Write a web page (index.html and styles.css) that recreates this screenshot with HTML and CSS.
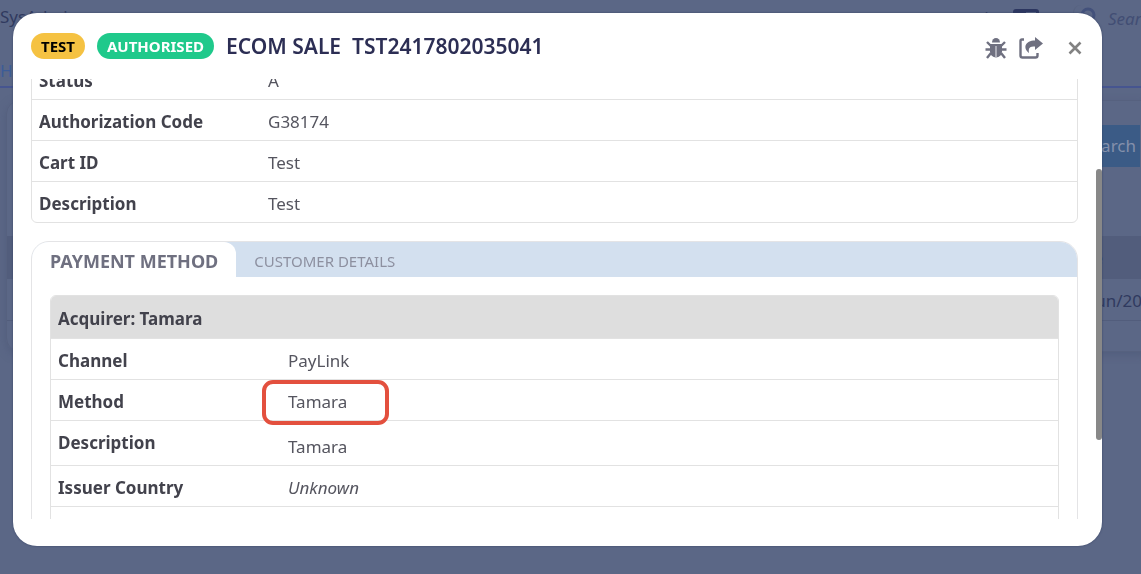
FILE: index.html
```
<!DOCTYPE html>
<html lang="en">
	<head>
		<meta charset="utf-8" />
		<title>ECOM SALE TST2417802035041</title>
		<link rel="stylesheet" href="styles.css">
	</head>
	<body>
		<div class="page">
			<header class="topbar">
				<span class="brand">SysAdmin</span>
				<div class="tools">
					<span class="mode">Mode</span>
					<span class="switch"></span>
					<div class="quick">
						<svg width="18" height="18" viewBox="0 0 18 18"><circle cx="8" cy="8" r="6" fill="none" stroke="#43517b" stroke-width="3"/><path d="M12 12l5 5" stroke="#43517b" stroke-width="3"/></svg>
						<input type="text" placeholder="Search" aria-label="Quick search">
					</div>
				</div>
			</header>
			<nav class="menu"><a href="#">Home</a></nav>
			<section class="panel">
				<div class="filter"><button type="button" class="search">Search</button></div>
				<div class="list_head">Date</div>
				<div class="list_row">26/Jun/20</div>
			</section>
		</div>

		<div class="overlay">
			<section class="modal" role="dialog" aria-labelledby="title">
				<header class="modal_head">
					<span class="badge test">TEST</span>
					<span class="badge ok">AUTHORISED</span>
					<h1 id="title">ECOM SALE&nbsp; TST2417802035041</h1>
					<div class="actions">
						<button type="button" aria-label="Debug">
							<svg width="22" height="22" viewBox="0 0 22 22">
								<path d="M7 5.500a4 4.500 0 0 1 8 0z" fill="#6f7080"/>
								<path d="M5 7h12v7.500a6 6 0 0 1-12 0z" fill="#6f7080"/>
								<path d="M6 9L2 5M16 9l4-4M6 12.500H.5M16 12.500h5.500M6 16l-4 5M16 16l4 5" fill="none" stroke="#6f7080" stroke-width="2.400"/>
								<path d="M11 9v11" stroke="#d5d5dc" stroke-width="1.200"/>
							</svg>
						</button>
						<button type="button" aria-label="Share">
							<svg width="24" height="22" viewBox="0 0 24 22">
								<path d="M5 2.500H3A1.500 1.500 0 0 0 1.500 4v14.500a2 2 0 0 0 2 2h13a2 2 0 0 0 2-2V16" fill="none" stroke="#6f7080" stroke-width="2.400"/>
								<path d="M16 0l8 6.500-8 6.500V9.500c-5 0-7 1-6 6.500C3.500 11 6 3.500 16 3.500z" fill="#6f7080"/>
							</svg>
						</button>
						<button type="button" class="close" aria-label="Close">
							<svg width="14" height="14" viewBox="0 0 14 14"><path d="M1.500 1.500l11 11M12.500 1.500l-11 11" stroke="#828282" stroke-width="2.600"/></svg>
						</button>
					</div>
				</header>

				<div class="modal_body">
					<table class="info summary">
						<tr><th scope="row">Status</th><td>A</td></tr>
						<tr><th scope="row">Authorization Code</th><td>G38174</td></tr>
						<tr><th scope="row">Cart ID</th><td>Test</td></tr>
						<tr><th scope="row">Description</th><td>Test</td></tr>
					</table>

					<div class="card">
						<div class="tabs" role="tablist">
							<button type="button" role="tab" class="active" aria-selected="true">PAYMENT METHOD</button>
							<button type="button" role="tab" aria-selected="false">CUSTOMER DETAILS</button>
						</div>
						<div class="tab_body">
							<table class="info">
								<tr class="group"><th colspan="2">Acquirer: Tamara</th></tr>
								<tr><th scope="row">Channel</th><td>PayLink</td></tr>
								<tr><th scope="row">Method</th><td><span class="marked">Tamara</span></td></tr>
								<tr class="tall"><th scope="row">Description</th><td>Tamara</td></tr>
								<tr><th scope="row">Issuer Country</th><td><i>Unknown</i></td></tr>
								<tr><th></th><td></td></tr>
							</table>
						</div>
					</div>
				</div>
				<div class="scrollbar"></div>
			</section>
		</div>
	</body>
</html>
```
FILE: styles.css
```
*,*:after{box-sizing: border-box;}
body{margin: 0;background: #5b6786;color: #42424c;font-family: "Noto Sans","Open Sans",sans-serif;font-size: 17px;line-height: 24px;}
button{padding: 0;border: 0;background: none;font: inherit;color: inherit;cursor: pointer;}
svg{display: block;}

/* page under the dialog */
.page{color: #303a5f;overflow: hidden;}
.topbar{display: flex;justify-content: space-between;height: 56px;padding-top: 5px;}
.tools{display: flex;margin-right: -60px;}
.mode{margin-right: 16px;font-size: 15px;}
.switch{width: 26px;height: 16px;margin: 4px 34px 0 0;border: 3px solid #2c3660;border-left-width: 13px;border-radius: 3px;}
.quick{display: flex;gap: 10px;width: 128px;height: 32px;padding: 2px 0 0 6px;border-left: 1px solid #56617f;border-radius: 8px;}
.quick input{width: 80px;height: 22px;padding: 0;border: 0;background: none;font: italic 17px "Noto Sans",sans-serif;}
.quick input::placeholder{color: #424e74;opacity: 1;}
.menu{height: 32px;padding-top: 3px;border-bottom: 2px solid #465590;}
.menu a{color: #3c5c97;text-decoration: none;}
.panel{height: 252px;margin: 12px -14px 12px 6px;border: 1px solid #56617f;border-radius: 14px;box-shadow: 0 3px 8px #525e7d;}
.filter{display: flex;justify-content: flex-end;height: 135px;padding: 24px 14px 0 0;}
.search{width: 86px;height: 42px;padding-right: 4px;background: #3b5b86;color: #8490ab;text-align: right;}
.list_head{height: 43px;padding: 10px 51px 0 0;background: #525d7c;text-align: right;}
.list_row{height: 42px;padding: 10px 12px 0 0;border-bottom: 1px solid #525d7c;text-align: right;}

/* dialog */
.overlay{position: fixed;top: 0;right: 0;bottom: 0;left: 0;display: flex;padding: 13px 39px 28px 13px;}
.modal{position: relative;display: flex;flex: 1;flex-direction: column;min-width: 0;padding: 0 24px 27px 18px;border-radius: 24px;background: #fff;box-shadow: 0 0 2px #333f60;}
.modal_head{display: flex;align-items: center;height: 66px;}
.badge{height: 26px;margin-right: 12px;padding: 0 10px;border-radius: 13px;font-size: 15px;line-height: 27px;font-weight: 700;}
.test{background: #f5c242;color: #000;}
.ok{background: #1fc98b;color: #fff;}
.modal h1{margin: 0;color: #2c2e54;font-size: 21px;line-height: 28px;font-weight: 600;}
.actions{display: flex;align-items: center;gap: 12px;margin: 4px -4px 0 auto;}
.close{margin-left: 13px;}
.modal_body{flex: 1;min-height: 0;overflow: hidden;}
.scrollbar{position: absolute;top: 156px;right: 0;width: 6px;height: 271px;border-radius: 3px;background: #888;}

.info{width: 100%;border: 1px solid #e2e2e2;border-radius: 6px;border-spacing: 0;}
.info th,.info td{height: 41px;padding: 3px 7px 0;border-bottom: 1px solid #e2e2e2;text-align: left;}
.info th{width: 229px;font-weight: 700;}
.info td{color: #55555f;}
.info tr:last-child th,.info tr:last-child td{height: 40px;border-bottom: 0;}
.info .group th{height: 43px;background: #dedede;border-radius: 5px 5px 0 0;}
.info .tall th,.info .tall td{height: 45px;padding-top: 0;}
.info .tall td{padding-top: 8px;}
.summary{margin: -21px 0 18px;}
.marked{position: relative;}
.marked:after{content: "";position: absolute;left: -26px;top: -10px;width: 127px;height: 45px;border: 4px solid #e3503e;border-radius: 11px;}

.card{border: 1px solid #e4e4e6;border-radius: 18px;overflow: hidden;}
.tabs{display: flex;height: 35px;background: #d3e0ef;}
.tabs button{padding: 2px 18px 0;color: #8d90a0;font-size: 15px;}
.tabs .active{border-top-right-radius: 12px;background: #fff;color: #6f7080;font-size: 18px;font-weight: 700;}
.tab_body{padding: 18px;}
.tab_body .info td{padding-left: 8px;}
```
